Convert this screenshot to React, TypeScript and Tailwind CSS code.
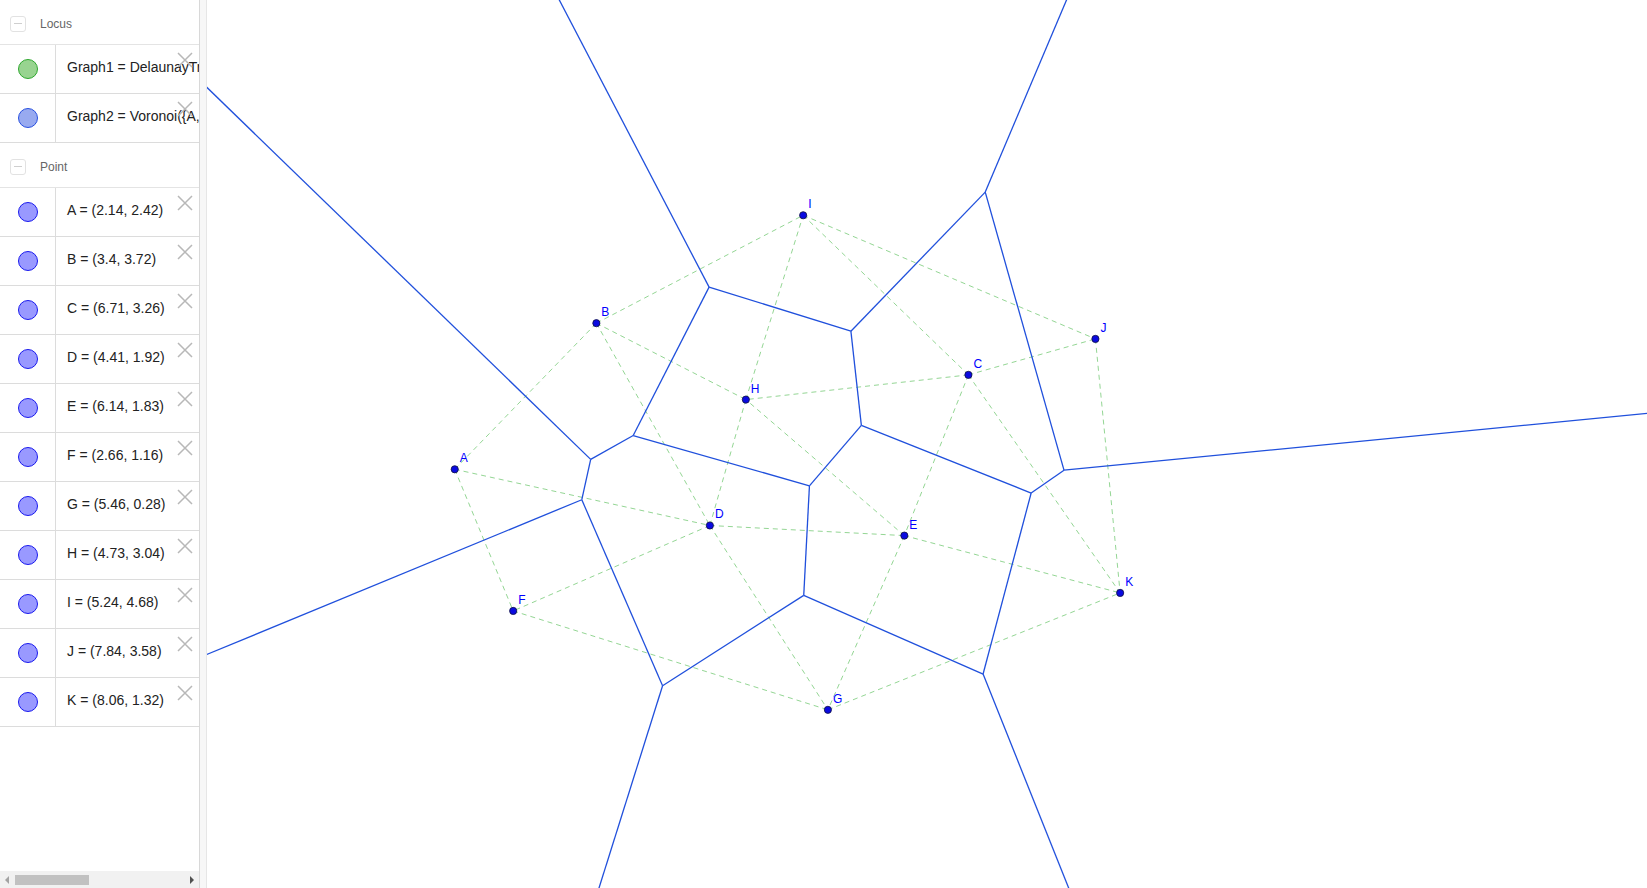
import React from 'react';

type Pt = { name: string; x: number; y: number };

const points: Pt[] = [
  { name: 'A', x: 2.14, y: 2.42 },
  { name: 'B', x: 3.4, y: 3.72 },
  { name: 'C', x: 6.71, y: 3.26 },
  { name: 'D', x: 4.41, y: 1.92 },
  { name: 'E', x: 6.14, y: 1.83 },
  { name: 'F', x: 2.66, y: 1.16 },
  { name: 'G', x: 5.46, y: 0.28 },
  { name: 'H', x: 4.73, y: 3.04 },
  { name: 'I', x: 5.24, y: 4.68 },
  { name: 'J', x: 7.84, y: 3.58 },
  { name: 'K', x: 8.06, y: 1.32 },
];

// world -> page pixels
const S = 112.4;
const X0 = 214.2;
const Y0 = 741.3;
const scr = (p: Pt) => ({ x: X0 + S * p.x, y: Y0 - S * p.y });
const byName: Record<string, { x: number; y: number }> = {};
points.forEach((p) => (byName[p.name] = scr(p)));

const triangles = [
  'IBH', 'IHC', 'ICJ', 'JCK', 'CKE', 'CEH', 'HED',
  'HDB', 'BDA', 'ADF', 'FDG', 'DGE', 'EGK',
];

function circum(t: string) {
  const a = byName[t[0]], b = byName[t[1]], c = byName[t[2]];
  const d = 2 * (a.x * (b.y - c.y) + b.x * (c.y - a.y) + c.x * (a.y - b.y));
  const a2 = a.x * a.x + a.y * a.y, b2 = b.x * b.x + b.y * b.y, c2 = c.x * c.x + c.y * c.y;
  return {
    x: (a2 * (b.y - c.y) + b2 * (c.y - a.y) + c2 * (a.y - b.y)) / d,
    y: (a2 * (c.x - b.x) + b2 * (a.x - c.x) + c2 * (b.x - a.x)) / d,
  };
}

// collect edges of the triangulation
const edgeMap: Record<string, number[]> = {};
triangles.forEach((t, i) => {
  for (let k = 0; k < 3; k++) {
    const key = [t[k], t[(k + 1) % 3]].sort().join('');
    (edgeMap[key] ||= []).push(i);
  }
});

const delaunay = Object.keys(edgeMap).map((k) => [byName[k[0]], byName[k[1]]]);

const voronoi: { x1: number; y1: number; x2: number; y2: number }[] = [];
Object.entries(edgeMap).forEach(([key, tris]) => {
  const c1 = circum(triangles[tris[0]]);
  if (tris.length === 2) {
    const c2 = circum(triangles[tris[1]]);
    voronoi.push({ x1: c1.x, y1: c1.y, x2: c2.x, y2: c2.y });
  } else {
    const p = byName[key[0]], q = byName[key[1]];
    const third = byName[triangles[tris[0]].split('').find((n) => !key.includes(n))!];
    let nx = -(q.y - p.y), ny = q.x - p.x;
    const mx = (p.x + q.x) / 2, my = (p.y + q.y) / 2;
    if (nx * (third.x - mx) + ny * (third.y - my) > 0) { nx = -nx; ny = -ny; }
    const len = Math.hypot(nx, ny);
    voronoi.push({ x1: c1.x, y1: c1.y, x2: c1.x + (nx / len) * 3000, y2: c1.y + (ny / len) * 3000 });
  }
});

function CloseX() {
  return (
    <svg width="16" height="16" viewBox="0 0 16 16" className="absolute right-[6px] top-[7px]">
      <path d="M1 1 L15 15 M15 1 L1 15" stroke="#b8b8b8" strokeWidth="1.5" fill="none" />
    </svg>
  );
}

function GroupHeader({ label }: { label: string }) {
  return (
    <div className="h-[45px] flex items-center pt-[3px] border-b border-[#e4e4e4] shrink-0">
      <div className="ml-[10px] w-[16px] h-[16px] rounded-[3px] border border-[#e2e2e2] flex items-center justify-center">
        <div className="w-[8px] h-[1.5px] bg-[#cfcfcf]" />
      </div>
      <span className="ml-[14px] text-[12px] text-[#666]">{label}</span>
    </div>
  );
}

function Row({ text, fill, stroke }: { text: string; fill: string; stroke: string }) {
  return (
    <div className="relative h-[49px] flex border-b border-[#dcdcdc] shrink-0">
      <div className="w-[56px] border-r border-[#dcdcdc] flex items-center justify-center">
        <div className="w-[20px] h-[20px] rounded-full border" style={{ background: fill, borderColor: stroke }} />
      </div>
      <div className="flex-1 flex items-center pl-[11px] pb-[4px] overflow-hidden whitespace-nowrap text-[14px] text-[#222]">
        {text}
      </div>
      <CloseX />
    </div>
  );
}

export default function App() {
  return (
    <div className="w-[1647px] h-[888px] flex bg-white overflow-hidden" style={{ fontFamily: '"Liberation Sans", Arial, sans-serif' }}>
      <div className="w-[200px] h-full flex flex-col border-r border-[#d8d8d8] shrink-0">
        <div className="flex-1 flex flex-col overflow-hidden">
          <GroupHeader label="Locus" />
          <Row text="Graph1 = DelaunayTriangulation({A, B, C, D, E, F, G, H, I, J, K})" fill="#98d490" stroke="#2ea82e" />
          <Row text="Graph2 = Voronoi({A, B, C, D, E, F, G, H, I, J, K})" fill="#98aaf0" stroke="#2850e0" />
          <GroupHeader label="Point" />
          {points.map((p) => (
            <Row
              key={p.name}
              text={`${p.name} = (${p.x}, ${p.y})`}
              fill="#9999ff"
              stroke="#1a1aee"
            />
          ))}
        </div>
        <div className="h-[17px] bg-[#f1f1f1] flex items-center shrink-0 relative">
          <svg width="6" height="8" viewBox="0 0 6 8" className="ml-[4px]">
            <path d="M5 0 L1 4 L5 8 Z" fill="#a3a3a3" />
          </svg>
          <div className="ml-[5px] w-[74px] h-[10px] bg-[#c1c1c1]" />
          <div className="flex-1" />
          <svg width="6" height="8" viewBox="0 0 6 8" className="mr-[4px]">
            <path d="M1 0 L5 4 L1 8 Z" fill="#505050" />
          </svg>
        </div>
      </div>
      <div className="w-[7px] h-full bg-[#f7f7f7] border-r border-[#e6e6e6] shrink-0" />
      <div className="flex-1 h-full relative overflow-hidden">
        <svg width="1440" height="888" viewBox="207 0 1440 888" className="block">
          {delaunay.map(([p, q], i) => (
            <line key={'d' + i} x1={p.x} y1={p.y} x2={q.x} y2={q.y} stroke="#94d694" strokeWidth="1" strokeDasharray="5 4" />
          ))}
          {voronoi.map((l, i) => (
            <line key={'v' + i} {...l} stroke="#2050dc" strokeWidth="1.3" />
          ))}
          {points.map((p) => {
            const s = byName[p.name];
            return (
              <g key={p.name}>
                <circle cx={s.x} cy={s.y} r="3.6" fill="#0a0ae0" stroke="#101040" strokeWidth="0.8" />
                <text x={s.x + 5} y={s.y - 7} fontSize="12" fill="#0000ff" fontFamily='"Liberation Sans", Arial, sans-serif'>
                  {p.name}
                </text>
              </g>
            );
          })}
        </svg>
      </div>
    </div>
  );
}
